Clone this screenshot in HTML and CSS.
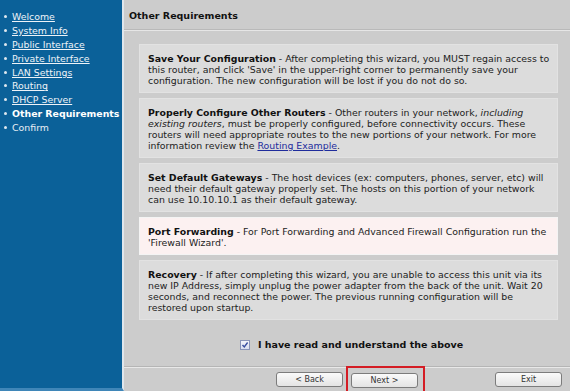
FILE: index.html
```html
<!DOCTYPE html>
<html>
<head>
<meta charset="utf-8">
<link rel="stylesheet" href="styles.css">
</head>
<body>
<div class="app">
  <nav class="sidebar">
    <ul class="steps">
      <li><a href="#">Welcome</a></li>
      <li><a href="#">System Info</a></li>
      <li><a href="#">Public Interface</a></li>
      <li><a href="#">Private Interface</a></li>
      <li><a href="#">LAN Settings</a></li>
      <li><a href="#">Routing</a></li>
      <li><a href="#">DHCP Server</a></li>
      <li class="current">Other Requirements</li>
      <li class="plain">Confirm</li>
    </ul>
  </nav>
  <main class="main">
    <header class="title">Other Requirements</header>
    <section class="content">
      <div class="box"><b>Save Your Configuration</b> - After completing this wizard, you MUST regain access to this router, and click 'Save' in the upper-right corner to permanently save your configuration. The new configuration will be lost if you do not do so.</div>
      <div class="box"><b>Properly Configure Other Routers</b> - Other routers in your network, <i>including existing routers</i>, must be properly configured, before connectivity occurs. These routers will need appropriate routes to the new portions of your network. For more information review the <a href="#" class="link">Routing Example</a>.</div>
      <div class="box"><b>Set Default Gateways</b> - The host devices (ex: computers, phones, server, etc) will need their default gateway properly set. The hosts on this portion of your network can use 10.10.10.1 as their default gateway.</div>
      <div class="box pink"><b>Port Forwarding</b> - For Port Forwarding and Advanced Firewall Configuration run the 'Firewall Wizard'.</div>
      <div class="box"><b>Recovery</b> - If after completing this wizard, you are unable to access this unit via its new IP Address, simply unplug the power adapter from the back of the unit. Wait 20 seconds, and reconnect the power. The previous running configuration will be restored upon startup.</div>
      <label class="agree"><span class="check"><svg width="8" height="8" viewBox="0 0 8 8"><path d="M1.5 4 L3.3 6 L6.6 1.5" fill="none" stroke="#3a4fa0" stroke-width="1.4"/></svg></span>I have read and understand the above</label>
    </section>
    <footer class="buttons">
      <button class="btn back">&lt; Back</button>
      <span class="highlight"><button class="btn">Next &gt;</button></span>
      <span class="spacer"></span>
      <button class="btn">Exit</button>
    </footer>
  </main>
</div>
</body>
</html>
```
FILE: styles.css
```css
html, body { margin: 0; padding: 0; }
body {
  font-family: "DejaVu Sans", Verdana, sans-serif;
  background: #cccccc;
  width: 570px;
  height: 391px;
  overflow: hidden;
}
.app { display: flex; height: 391px; }
.sidebar {
  width: 124px;
  flex: none;
  background: #0b6199;
  border-right: 2px solid #dfe6ec;
  border-bottom: 3px solid #3f86b8;
  box-sizing: border-box;
}
.steps {
  list-style: none;
  margin: 0;
  padding: 10px 0 0 3px;
  font-size: 9.4px;
  color: #e8eef4;
}
.steps li {
  height: 13.9px;
  line-height: 13px;
  white-space: nowrap;
}
.steps li::before {
  content: "";
  display: inline-block;
  width: 3px;
  height: 3px;
  border-radius: 50%;
  background: #dfe8f0;
  margin: 0 5px 2px 1px;
  vertical-align: middle;
}
.steps a { color: #eef3f8; text-decoration: underline; }
.steps .current { font-weight: bold; color: #ffffff; }
.main {
  flex: 1;
  display: flex;
  flex-direction: column;
  min-width: 0;
}
.title {
  height: 31px;
  box-sizing: border-box;
  padding: 10px 0 0 5px;
  font-size: 9.5px;
  font-weight: bold;
  color: #111;
  border-bottom: 1px solid #e6e6e6;
  box-shadow: 0 -1px 0 #b9b9b9 inset;
}
.content {
  flex: 1;
  padding: 13px 12px 0 15px;
  display: flex;
  flex-direction: column;
  gap: 5px;
}
.box {
  background: #dcdcdc;
  border: 1px solid #e2e2e2;
  padding: 8px 6px 6px 8px;
  font-size: 9.4px;
  line-height: 11px;
  color: #222;
}
.box b { color: #111; }
.box.pink { background: #fcf1f1; border-color: #f4f4f4; }
.link { color: #1f2c9c; text-decoration: underline; }
.agree {
  display: flex;
  align-items: center;
  justify-content: center;
  margin-top: 14px;
  font-family: "DejaVu Sans", Verdana, sans-serif;
  font-size: 9.5px;
  font-weight: bold;
  color: #111;
  gap: 8px;
  padding-left: 6px;
}
.check {
  width: 8px;
  height: 8px;
  border: 1px solid #8a94b8;
  background: linear-gradient(#f3f4fa, #d9def0);
  display: flex;
  align-items: center;
  justify-content: center;
}
.buttons {
  height: 25px;
  box-sizing: border-box;
  border-top: 1px solid #b5b5b5;
  box-shadow: 0 1px 0 #e8e8e8 inset;
  display: flex;
  align-items: center;
  padding: 0 8px 0 152px;
}
.btn {
  width: 67px;
  height: 15px;
  padding: 0;
  font-family: "DejaVu Sans", Verdana, sans-serif;
  font-size: 8px;
  color: #333;
  background: linear-gradient(#fafafa, #e4e4e4);
  border: 1px solid #7c7c7c;
  border-radius: 3px;
}
.highlight {
  margin-left: 3px;
  border: 2px solid #d41c24;
  padding: 5px 5px 3px 3px;
  display: flex;
}
.spacer { flex: 1; }
```
